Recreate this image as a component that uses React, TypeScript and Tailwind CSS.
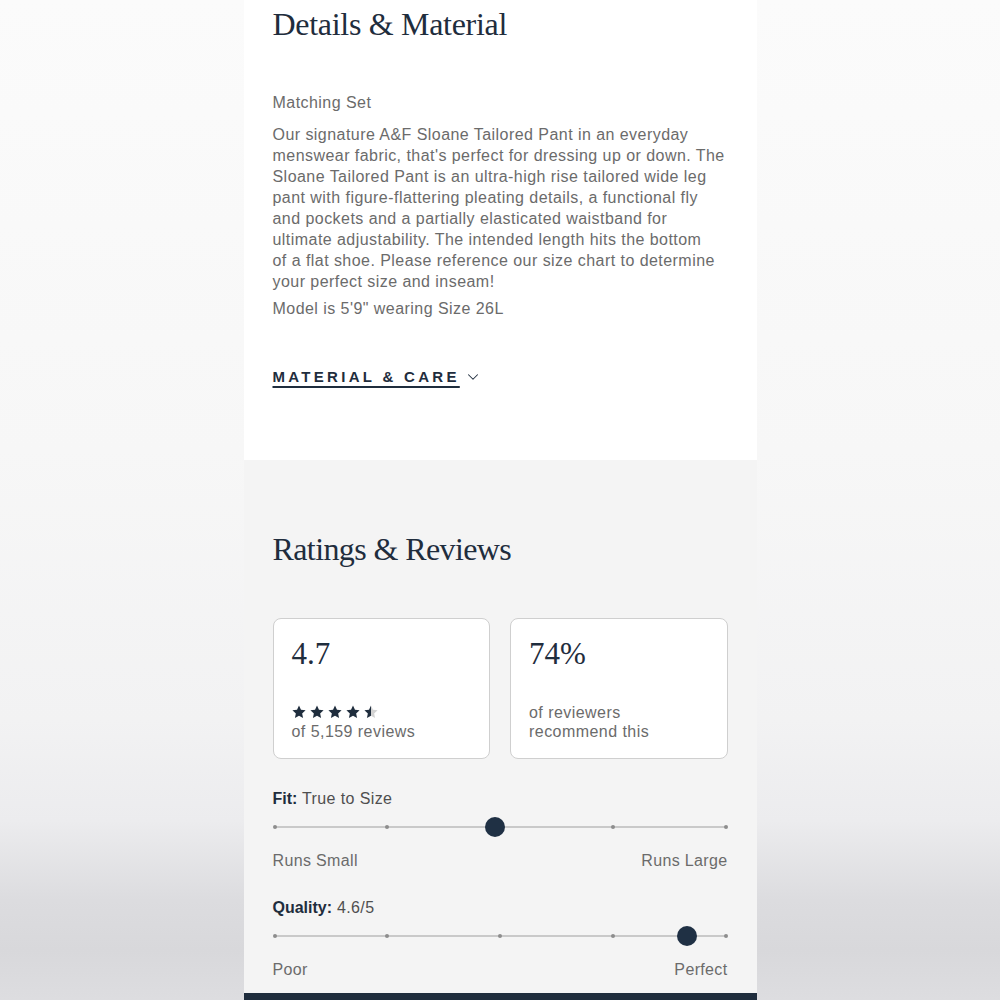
import { ChevronDown } from "lucide-react"

const serif = "font-['Liberation_Serif',serif]"
const sans = "font-['Liberation_Sans',Arial,sans-serif]"

const description = [
  "Our signature A&F Sloane Tailored Pant in an everyday",
  "menswear fabric, that's perfect for dressing up or down. The",
  "Sloane Tailored Pant is an ultra-high rise tailored wide leg",
  "pant with figure-flattering pleating details, a functional fly",
  "and pockets and a partially elasticated waistband for",
  "ultimate adjustability. The intended length hits the bottom",
  "of a flat shoe. Please reference our size chart to determine",
  "your perfect size and inseam!",
]

const sliders = [
  { label: "Fit:", value: "True to Size", position: 0.488, low: "Runs Small", high: "Runs Large" },
  { label: "Quality:", value: "4.6/5", position: 0.915, low: "Poor", high: "Perfect" },
]

const STAR = "M12 0.5l3.4 7.2 7.9.9-5.9 5.4 1.6 7.8L12 17.9l-7 3.9 1.6-7.8L.7 8.6l7.9-.9z"

function Stars({ rating }: { rating: number }) {
  return (
    <div className="flex gap-[4px]">
      {[0, 1, 2, 3, 4].map((i) => {
        const fill = Math.max(0, Math.min(1, rating - i))
        return (
          <svg key={i} viewBox="0 0 24 23" className="w-[14px] h-[14px]">
            <defs>
              <linearGradient id={`star-${i}`}>
                <stop offset={fill} stopColor="#1f2d3d" />
                <stop offset={fill} stopColor="#d3d3d3" />
              </linearGradient>
            </defs>
            <path d={STAR} fill={`url(#star-${i})`} />
          </svg>
        )
      })}
    </div>
  )
}

function Scale({ label, value, position, low, high }: (typeof sliders)[number]) {
  return (
    <div>
      <p className="text-[16px] leading-[21px] text-[#4f4f4f] tracking-[0.4px]">
        <span className="font-bold text-[#1f2d3d] tracking-[0px]">{label}</span> {value}
      </p>
      <div className="relative h-[20px] mt-[8px] mx-[2px]">
        <div className="absolute left-0 right-0 top-[9px] h-[2px] bg-[#c9c9c9]" />
        {[0, 25, 50, 75, 100].map((p) => (
          <span
            key={p}
            className="absolute top-[8px] w-[4px] h-[4px] -ml-[2px] rounded-full bg-[#8d8d8d]"
            style={{ left: `${p}%` }}
          />
        ))}
        <span
          className="absolute top-0 w-[20px] h-[20px] -ml-[10px] rounded-full bg-[#1f3044]"
          style={{ left: `${position * 100}%` }}
        />
      </div>
      <div className="flex justify-between mt-[13px] text-[16px] leading-[21px] text-[#6b6b6b] tracking-[0.35px]">
        <span>{low}</span>
        <span>{high}</span>
      </div>
    </div>
  )
}

export default function App() {
  return (
    <div
      className={`h-[1000px] overflow-hidden flex justify-center bg-[linear-gradient(to_bottom,#fbfbfb_0%,#f7f7f7_45%,#f2f2f3_72%,#ececee_82%,#dcdcdf_90%,#d8d8db_95%,#dddde0_100%)] ${sans}`}
    >
      <div className="w-[513px] flex flex-col">
        {/* Details & Material */}
        <section className="h-[460px] bg-white px-[29px] pt-[5px]">
          <h2 className={`${serif} text-[32px] leading-[38px] text-[#1f2d3d] tracking-[-0.3px]`}>Details &amp; Material</h2>
          <p className="mt-[49px] text-[16px] leading-[21px] text-[#6b6b6b] tracking-[0.45px]">Matching Set</p>
          <p className="mt-[11px] text-[16px] leading-[21px] text-[#6b6b6b] tracking-[0.45px] whitespace-nowrap">
            {description.map((line, i) => (
              <span key={i} className="block">
                {line}
              </span>
            ))}
          </p>
          <p className="mt-[6px] text-[16px] leading-[21px] text-[#6b6b6b] tracking-[0.45px]">
            Model is 5'9" wearing Size 26L
          </p>
          <button className="mt-[48px] flex items-center gap-[4px] text-[#1f2d3d]">
            <span className="text-[15px] leading-[20px] font-bold tracking-[3.3px] underline underline-offset-[4px] decoration-[1.5px]">
              MATERIAL &amp; CARE
            </span>
            <ChevronDown className="w-[18px] h-[18px]" strokeWidth={1.4} />
          </button>
        </section>

        {/* Ratings & Reviews */}
        <section className="h-[533px] bg-[#f4f4f4] px-[29px] pt-[70px]">
          <h2 className={`${serif} text-[32px] leading-[38px] text-[#1f2d3d] tracking-[-0.6px]`}>Ratings &amp; Reviews</h2>

          <div className="mt-[50px] grid grid-cols-2 gap-[20px]">
            <div className="h-[141px] flex flex-col justify-between rounded-[8px] border border-[#cfcfcf] bg-white px-[18px] pt-[17px] pb-[17px]">
              <p className={`${serif} text-[31px] leading-[36px] text-[#1f2d3d]`}>4.7</p>
              <div>
                <Stars rating={4.5} />
                <p className="mt-[3px] text-[16px] leading-[19px] text-[#6b6b6b] tracking-[0.45px]">of 5,159 reviews</p>
              </div>
            </div>
            <div className="h-[141px] flex flex-col justify-between rounded-[8px] border border-[#cfcfcf] bg-white px-[18px] pt-[17px] pb-[17px]">
              <p className={`${serif} text-[31px] leading-[36px] text-[#1f2d3d]`}>74%</p>
              <p className="text-[16px] leading-[19px] text-[#6b6b6b] tracking-[0.45px]">
                of reviewers
                <br />
                recommend this
              </p>
            </div>
          </div>

          <div className="mt-[29px] flex flex-col gap-[26px]">
            {sliders.map((s) => (
              <Scale key={s.label} {...s} />
            ))}
          </div>
        </section>

        <div className="h-[7px] bg-[#1f2d3d]" />
      </div>
    </div>
  )
}
